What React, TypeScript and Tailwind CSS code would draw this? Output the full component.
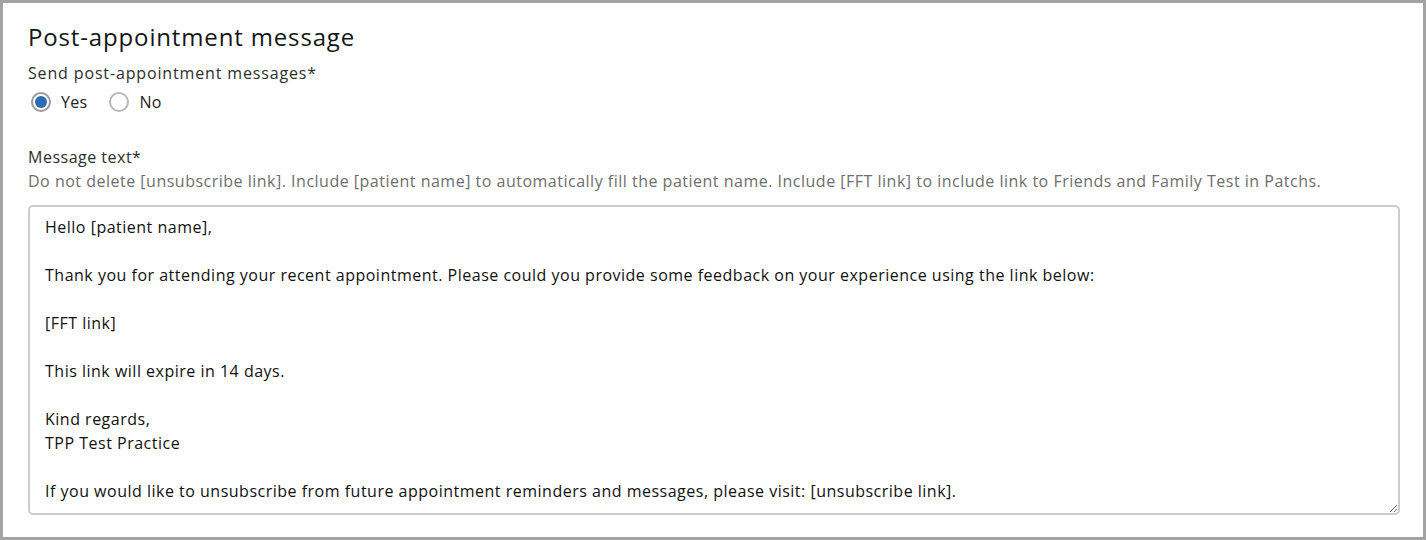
import React from "react";

const message = `Hello [patient name],

Thank you for attending your recent appointment. Please could you provide some feedback on your experience using the link below:

[FFT link]

This link will expire in 14 days.

Kind regards,
TPP Test Practice

If you would like to unsubscribe from future appointment reminders and messages, please visit: [unsubscribe link].`;

function Radio({ checked, label }: { checked: boolean; label: string }) {
  return (
    <label className="flex items-center gap-[10px] cursor-pointer">
      <span
        className={
          checked
            ? "w-[20px] h-[20px] rounded-full border-2 border-[#9a9a9a] flex items-center justify-center bg-white"
            : "w-[20px] h-[20px] rounded-full border-2 border-[#b8b8b8] bg-white"
        }
      >
        {checked && <span className="w-[12px] h-[12px] rounded-full bg-[#2a6db5]" />}
      </span>
      <span className="text-[16px] leading-[22px] tracking-[0.3px] text-[#222]">{label}</span>
    </label>
  );
}

export default function App() {
  return (
    <div
      className="w-[1426px] h-[540px] border-[3px] border-[#a3a3a3] bg-white pl-[25px] pr-[23px] pt-[18px]"
      style={{ fontFamily: "'Open Sans', 'Noto Sans', sans-serif" }}
    >
      <h2 className="text-[24px] leading-[32px] tracking-[0.85px] text-[#161616]">Post-appointment message</h2>
      <div className="mt-[9px] text-[16px] leading-[22px] tracking-[0.85px] text-[#2e2e2e]">
        Send post-appointment messages*
      </div>
      <div className="mt-[7px] flex items-center gap-[22px] pl-[3px]">
        <Radio checked label="Yes" />
        <Radio checked={false} label="No" />
      </div>
      <div className="mt-[33px] text-[16px] leading-[22px] tracking-[0.5px] text-[#2e2e2e]">Message text*</div>
      <div className="mt-[2px] text-[16px] leading-[22px] tracking-[0.5px] text-[#6e6e6e]">
        Do not delete [unsubscribe link]. Include [patient name] to automatically fill the patient name. Include [FFT link] to include link to Friends and Family Test in Patchs.
      </div>
      <textarea
        className="mt-[13px] block w-full h-[310px] border-2 border-[#cccccc] rounded-[5px] px-[15px] pt-[8px] pb-[10px] text-[16px] leading-[24px] tracking-[0.5px] text-[#111] outline-none resize-y"
        defaultValue={message}
        style={{ fontFamily: "'Open Sans', 'Noto Sans', sans-serif" }}
      />
    </div>
  );
}
